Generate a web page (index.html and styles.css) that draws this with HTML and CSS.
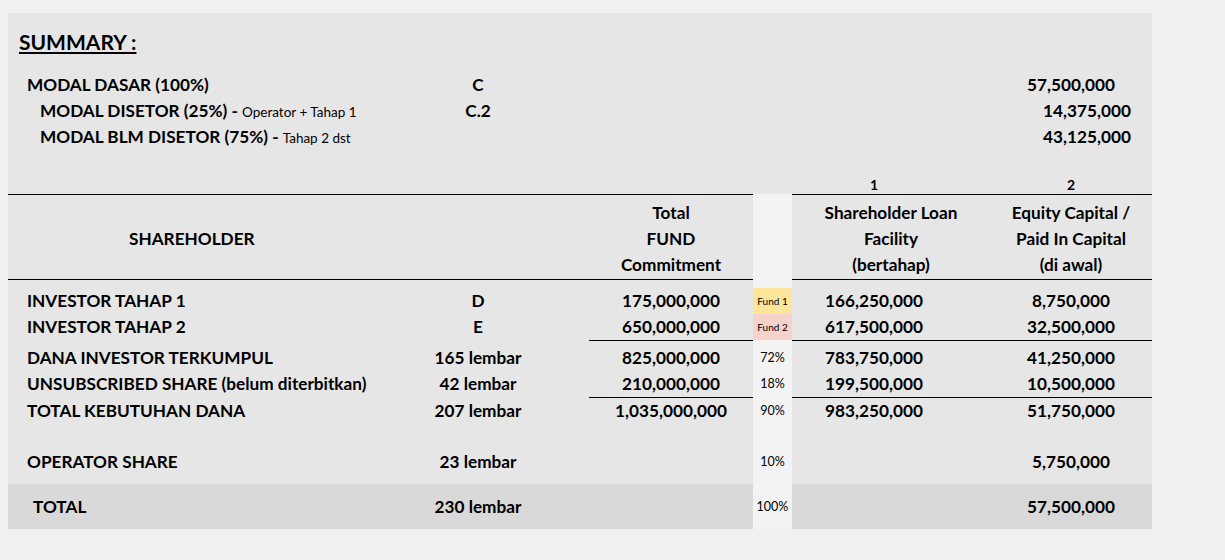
FILE: index.html
```html
<!DOCTYPE html>
<html>
<head>
<meta charset="utf-8">
<link rel="stylesheet" href="styles.css">
</head>
<body>
<div class="sheet">
  <div class="title"><span>SUMMARY :</span></div>

  <div class="row r26">
    <div class="lbl">MODAL DASAR (100%)</div>
    <div class="code">C</div>
    <div class="eq">57,500,000</div>
  </div>
  <div class="row r26">
    <div class="lbl ind">MODAL DISETOR (25%) - <span class="sm">Operator + Tahap 1</span></div>
    <div class="code">C.2</div>
    <div class="eq shift">14,375,000</div>
  </div>
  <div class="row r26">
    <div class="lbl ind">MODAL BLM DISETOR (75%) - <span class="sm">Tahap 2 dst</span></div>
    <div class="eq shift">43,125,000</div>
  </div>

  <div class="spacer s26"></div>

  <div class="row colnum">
    <div class="loan">1</div>
    <div class="eq">2</div>
  </div>

  <div class="data">
    <div class="row head">
      <div class="hshare">SHAREHOLDER</div>
      <div class="fund hl">Total<br>FUND<br>Commitment</div>
      <div class="hloan hl">Shareholder Loan<br>Facility<br>(bertahap)</div>
      <div class="eq hl">Equity Capital /<br>Paid In Capital<br>(di awal)</div>
    </div>

    <div class="spacer s8"></div>

    <div class="row r26">
      <div class="lbl">INVESTOR TAHAP 1</div>
      <div class="code">D</div>
      <div class="fund">175,000,000</div>
      <div class="pct badge f1">Fund 1</div>
      <div class="loan">166,250,000</div>
      <div class="eq">8,750,000</div>
    </div>
    <div class="row r26">
      <div class="lbl">INVESTOR TAHAP 2</div>
      <div class="code">E</div>
      <div class="fund">650,000,000</div>
      <div class="pct badge f2">Fund 2</div>
      <div class="loan">617,500,000</div>
      <div class="eq">32,500,000</div>
    </div>

    <div class="row lrow lrow-a">
      <div class="lbl">DANA INVESTOR TERKUMPUL</div>
      <div class="code">165 lembar</div>
      <div class="fund ln">825,000,000</div>
      <div class="pct">72%</div>
      <div class="loan ln">783,750,000</div>
      <div class="eq ln">41,250,000</div>
    </div>
    <div class="row r26">
      <div class="lbl">UNSUBSCRIBED SHARE (belum diterbitkan)</div>
      <div class="code">42 lembar</div>
      <div class="fund">210,000,000</div>
      <div class="pct">18%</div>
      <div class="loan">199,500,000</div>
      <div class="eq">10,500,000</div>
    </div>
    <div class="row lrow lrow-b">
      <div class="lbl">TOTAL KEBUTUHAN DANA</div>
      <div class="code">207 lembar</div>
      <div class="fund ln">1,035,000,000</div>
      <div class="pct">90%</div>
      <div class="loan ln">983,250,000</div>
      <div class="eq ln">51,750,000</div>
    </div>

    <div class="spacer s26"></div>

    <div class="row r26">
      <div class="lbl">OPERATOR SHARE</div>
      <div class="code">23 lembar</div>
      <div class="pct">10%</div>
      <div class="eq">5,750,000</div>
    </div>

    <div class="spacer s9"></div>

    <div class="row total">
      <div class="lbl tlbl">TOTAL</div>
      <div class="code">230 lembar</div>
      <div class="pct plight">100%</div>
      <div class="eq">57,500,000</div>
    </div>
  </div>
</div>
</body>
</html>
```
FILE: styles.css
```css
html, body {
  margin: 0;
  padding: 0;
}
body {
  background: #f0f0f0;
  font-family: Lato, "Open Sans", "DejaVu Sans", sans-serif;
  color: #000;
  width: 1225px;
  height: 560px;
  overflow: hidden;
}
.sheet {
  margin: 13px 0 0 8px;
  width: 1144px;
  height: 516px;
  background: #e6e6e6;
  font-weight: 700;
  font-size: 17.2px;
}
.title {
  height: 59px;
  line-height: 58px;
  padding-left: 11px;
  font-size: 21px;
}
.title span {
  text-decoration: underline;
  text-decoration-thickness: 2px;
  text-underline-offset: 2px;
}
.row {
  display: grid;
  grid-template-columns: 392px 156px 33px 164px 39px 198px 162px;
}
.row > div {
  white-space: nowrap;
}
.r26 {
  height: 26px;
  line-height: 26px;
}
.spacer.s26 { height: 26px; }
.spacer.s8 { height: 8px; }
.spacer.s9 { height: 9px; }

.lbl { grid-column: 1; padding-left: 19px; }
.ind { padding-left: 32px; }
.sm { font-size: 13.5px; font-weight: 400; }
.code { grid-column: 2; text-align: center; }
.fund { grid-column: 4; text-align: center; }
.pct {
  grid-column: 5;
  text-align: center;
  font-size: 12.5px;
  font-weight: 400;
}
.loan { grid-column: 6; text-align: center; padding-right: 34px; }
.eq { grid-column: 7; text-align: center; }
.eq.shift { padding-left: 32px; }

.colnum {
  height: 18px;
  line-height: 18px;
  font-size: 14px;
}

.data {
  background: linear-gradient(to right, transparent 745px, #f3f3f3 745px, #f3f3f3 784px, transparent 784px);
}

.head > div {
  border-top: 1px solid #000;
  border-bottom: 1px solid #000;
  padding: 5px 0 1px;
  line-height: 26px;
}
.head > .hshare {
  grid-column: 1 / 4;
  padding-top: 31px;
  padding-left: 121px;
}
.head > .hloan {
  grid-column: 6;
  text-align: center;
}

.badge {
  font-size: 10px;
}
.f1 { background: #fee59c; }
.f2 { background: #f6d2cc; }

.lrow > div {
  border-top: 1px solid transparent;
}
.lrow > .ln {
  border-top-color: #000;
}
.lrow-a > div {
  padding-top: 4px;
  line-height: 26px;
}
.lrow-b > div {
  line-height: 25px;
}

.total {
  height: 45px;
  line-height: 45px;
  background: #d9d9d9;
}
.tlbl { padding-left: 25px; }
.plight { background: #f3f3f3; }
```
